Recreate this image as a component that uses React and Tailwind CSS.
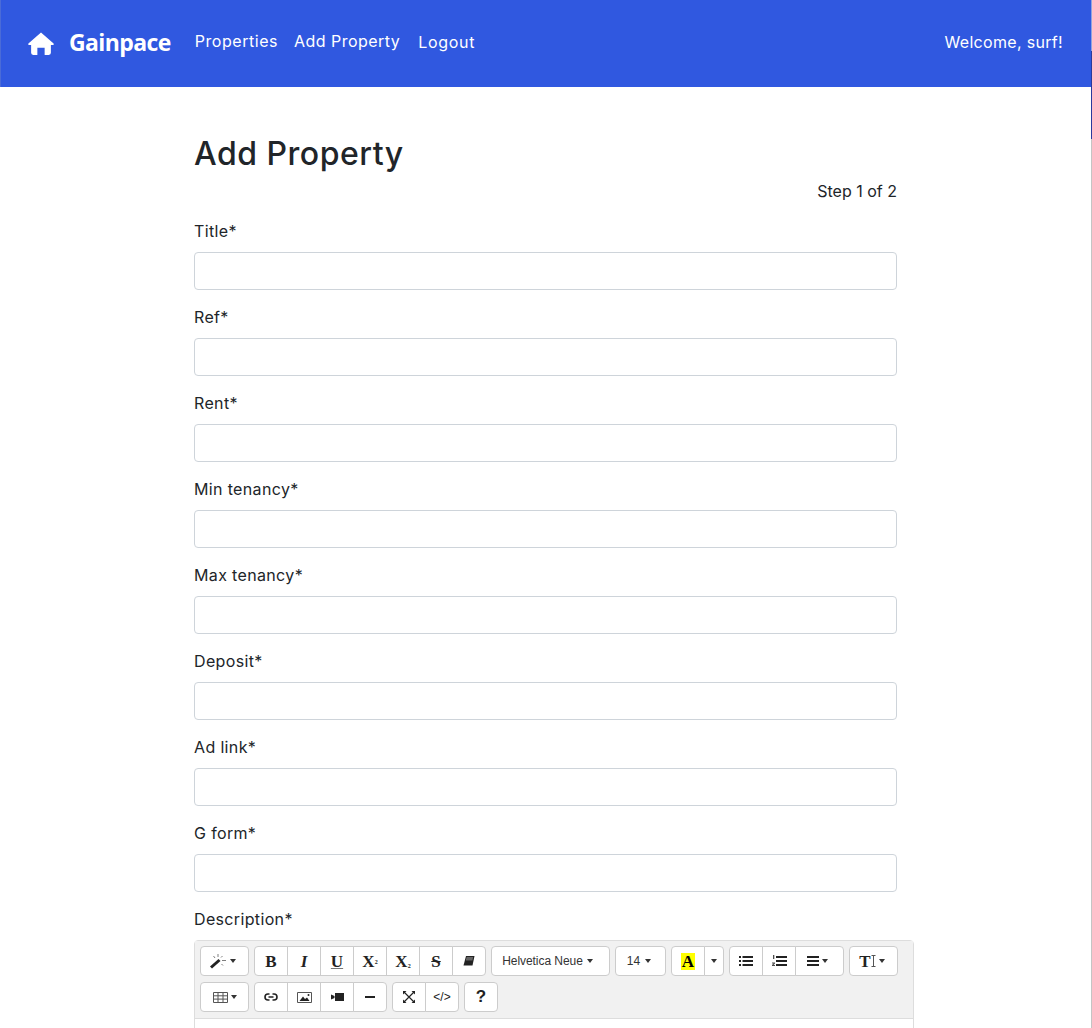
const fields = ['Title*', 'Ref*', 'Rent*', 'Min tenancy*', 'Max tenancy*', 'Deposit*', 'Ad link*', 'G form*'];

const Caret = () => <span className="inline-block w-0 h-0 border-x-[3.5px] border-x-transparent border-t-[4px] border-t-[#333]" />;

function Btn({ w = 'w-[34px]', children }) {
    return (
        <div className={`h-[30px] flex items-center justify-center gap-[3px] bg-white border border-[#ccc] -ml-px first:ml-0 first:rounded-l-[4px] last:rounded-r-[4px] text-[#222] text-xs ${w}`}>
            {children}
        </div>
    );
}

const Serif = ({ children, className = '' }) => (
    <span className={`font-['Liberation_Serif',serif] font-bold text-[17px] leading-none ${className}`}>{children}</span>
);

const Svg = ({ children, w = 14, h = 14 }) => (
    <svg width={w} height={h} viewBox={`0 0 ${w} ${h}`} fill="currentColor">{children}</svg>
);

const Bars = ({ x = 0, w = 14 }) => (
    <>
        <rect x={x} y="2" width={w - x} height="2" />
        <rect x={x} y="6" width={w - x} height="2" />
        <rect x={x} y="10" width={w - x} height="2" />
    </>
);

const HomeIcon = () => (
    <svg width="26" height="23" viewBox="0 0 25 22" fill="white" className="ml-[27px]">
        <path d="M12.500.5 24.600 11Q25.200 12.500 23.500 12.500H22V20Q22 22 20 22H16V15H9V22H5Q3 22 3 20V12.500H1.500Q-.2 12.500.4 11Z" />
    </svg>
);

const Wand = () => (
    <svg width="17" height="15" viewBox="0 0 17 15" fill="currentColor" className="-ml-[3px]">
        <path d="M0 12.500 8.500 5l2 2-8.500 7.500z" />
        <path d="M8 0v3M3.500 2l1.500 2M12.500 2l-1.500 1.500M12 6.500h4M11.500 10l1.500 1.500" stroke="currentColor" strokeWidth="0.9" fill="none" opacity="0.65" />
    </svg>
);

const Eraser = () => (
    <Svg w={12} h={12}>
        <path d="M3 1h8.500L9.500 10.500H.5z" />
        <path d="M3.600 2h6.500l-.7 3.500H2.800z" fill="white" opacity="0.3" />
    </Svg>
);

const TableIcon = () => (
    <Svg w={15} h={13}>
        <path d="M.5 1.500h14v10H.5zM.5 4.800h14M.5 8.100h14M5 1.500v10M10 1.500v10" fill="none" stroke="#555" strokeWidth="1" />
    </Svg>
);

const LinkIcon = () => (
    <Svg>
        <path d="M5.500 4H4a3 3 0 0 0 0 6h1.500M8.500 4H10a3 3 0 0 1 0 6H8.500M4.500 7h5" fill="none" stroke="currentColor" strokeWidth="1.600" />
    </Svg>
);

const ImageIcon = () => (
    <Svg w={15} h={13}>
        <path d="M.5 1.500h14v10H.5z" fill="none" stroke="#555" strokeWidth="1" />
        <path d="M2.500 10 6 5.500l2 2.500 2-1.500 2.500 3.500z" />
        <circle cx="11.500" cy="4" r="1" />
    </Svg>
);

const Video = () => (
    <Svg>
        <rect x="5" y="3" width="9" height="8" />
        <path d="M1 4.500 4.500 6v2L1 9.500z" />
    </Svg>
);

const Expand = () => (
    <Svg>
        <path d="M2 2l10 10M12 2 2 12" stroke="currentColor" strokeWidth="1.200" />
        <path d="M1 1h3.500L1 4.500zM13 1H9.500L13 4.500zM1 13h3.500L1 9.500zM13 13H9.500L13 9.500z" />
    </Svg>
);

const Ul = () => (
    <Svg>
        <rect x="0" y="2" width="2" height="2" />
        <rect x="0" y="6" width="2" height="2" />
        <rect x="0" y="10" width="2" height="2" />
        <Bars x={3.500} />
    </Svg>
);

const Ol = () => (
    <Svg w={15} h={14}>
        <rect x="1" y="1" width="1.300" height="4" opacity="0.8" />
        <path d="M0 8.500h3v1L1.500 11H3v1H0v-1l1.500-1.500H0z" opacity="0.8" />
        <Bars x={4} w={15} />
    </Svg>
);

const TextHeight = () => (
    <span className="flex items-center -ml-[3px]">
        <Serif>T</Serif>
        <svg width="5" height="12" viewBox="0 0 5 12" fill="#555">
            <path d="M2 1h1v10H2zM.5 0h4v1h-4zM.5 11h4v1h-4z" />
        </svg>
    </span>
);

export default function App() {
    return (
        <div className="h-[1028px] overflow-hidden bg-white relative font-['Inter',sans-serif] text-[#212529]">
            {/* browser scrollbar edge */}
            <div className="absolute right-0 top-0 bottom-0 w-px bg-[#c4c4c4]" />
            <div className="absolute right-0 top-0 h-[51px] w-px bg-[#8fa3df]" />
            <div className="absolute right-0 top-[51px] h-[88px] w-px bg-[#2a3a9c]" />

            <nav className="h-[87px] bg-[#3058e0] border-l border-[#4a6bd8] flex items-center text-white text-base">
                <HomeIcon />
                <span className="ml-[15px] -mt-[3px] font-['Open_Sans',sans-serif] font-bold text-[23px] tracking-[-0.6px]">Gainpace</span>
                <span className="ml-6 -mt-[5px] tracking-[0.55px]">Properties</span>
                <span className="ml-4 -mt-[5px] tracking-[0.45px]">Add Property</span>
                <span className="ml-[18px] -mt-[3px] tracking-[0.7px]">Logout</span>
                <span className="ml-auto mr-[29px] -mt-[3px] tracking-[0.32px]">Welcome, surf!</span>
            </nav>

            <main className="ml-[194px] w-[703px] pt-[48px]">
                <h1 className="text-[32px] leading-[38px] font-medium tracking-[0.5px]">Add Property</h1>
                <p className="mt-[6px] mb-4 text-right leading-6">Step 1 of 2</p>
                {fields.map((f) => (
                    <div key={f} className="mb-[15px]">
                        <label className="block leading-6 mb-[9px] tracking-[0.35px]">{f}</label>
                        <input className="block w-full h-[38px] border border-[#ced4da] rounded bg-white" />
                    </div>
                ))}
                <label className="block leading-6 mb-[9px] tracking-[0.35px]">Description*</label>
                <div className="w-[720px] border border-[#ddd] rounded-t bg-white h-[200px]">
                    <div className="bg-[#f1f1f1] border-b border-[#ddd] h-[78px] pl-[5px] pt-[5px] flex flex-col gap-[6px]">
                        <div className="flex gap-[5px]">
                            <div className="flex"><Btn w="w-[49px]"><Wand /><Caret /></Btn></div>
                            <div className="flex">
                                <Btn><Serif>B</Serif></Btn>
                                <Btn><Serif className="italic">I</Serif></Btn>
                                <Btn><Serif className="underline decoration-[#777]">U</Serif></Btn>
                                <Btn><Serif>X<sup className="text-[6px]">2</sup></Serif></Btn>
                                <Btn><Serif>X<sub className="text-[6px]">2</sub></Serif></Btn>
                                <Btn><Serif className="line-through px-[1px]">S</Serif></Btn>
                                <Btn><Eraser /></Btn>
                            </div>
                            <div className="flex"><Btn w="w-[119px]"><span className="font-['Liberation_Sans',sans-serif] -ml-[6px] mr-[1px] text-[#333] tracking-[-0.05px]">Helvetica Neue</span><Caret /></Btn></div>
                            <div className="flex"><Btn w="w-[51px]"><span className="font-['Liberation_Sans',sans-serif] -ml-[3px] mr-[2px] text-[#333]">14</span><Caret /></Btn></div>
                            <div className="flex">
                                <Btn><Serif className="bg-[#ffff00] px-[1px] text-black">A</Serif></Btn>
                                <Btn w="w-[20px]"><Caret /></Btn>
                            </div>
                            <div className="flex">
                                <Btn><Ul /></Btn>
                                <Btn><Ol /></Btn>
                                <Btn w="w-[49px]"><span className="-ml-[4px] flex"><Svg w={12}><Bars w={12} /></Svg></span><Caret /></Btn>
                            </div>
                            <div className="flex"><Btn w="w-[49px]"><TextHeight /><Caret /></Btn></div>
                        </div>
                        <div className="flex gap-[5px]">
                            <div className="flex"><Btn w="w-[49px]"><TableIcon /><Caret /></Btn></div>
                            <div className="flex">
                                <Btn><LinkIcon /></Btn>
                                <Btn><ImageIcon /></Btn>
                                <Btn><Video /></Btn>
                                <Btn><Svg><rect x="2" y="6" width="10" height="2" /></Svg></Btn>
                            </div>
                            <div className="flex">
                                <Btn><Expand /></Btn>
                                <Btn><span className="font-['Liberation_Sans',sans-serif] text-[12px]">&lt;/&gt;</span></Btn>
                            </div>
                            <div className="flex"><Btn><span className="font-['Liberation_Sans',sans-serif] font-bold text-[17px]">?</span></Btn></div>
                        </div>
                    </div>
                </div>
            </main>
        </div>
    );
}
